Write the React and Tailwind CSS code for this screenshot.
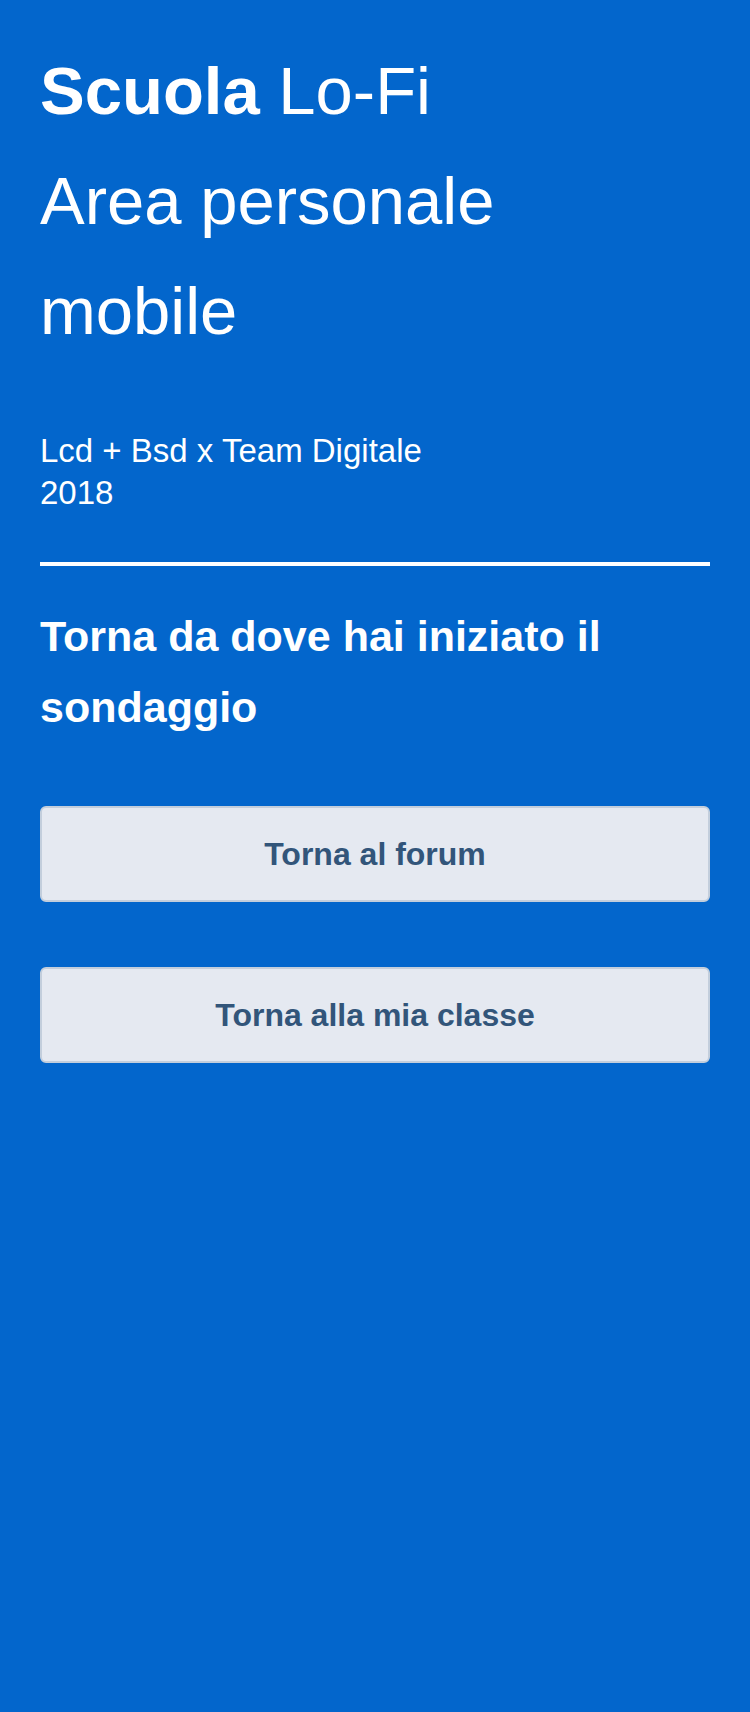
import React from 'react';

const App = () => {
  const buttons = ['Torna al forum', 'Torna alla mia classe'];

  return (
    <div className="min-h-[1712px] w-full bg-[#0366cc] px-[40px] pt-[36px] text-white font-['Liberation_Sans',Arial,sans-serif]">
      {/* Title */}
      <h1 className="text-[67px] leading-[110px] font-normal">
        <span className="font-bold">Scuola</span> Lo-Fi
        <br />
        Area personale
        <br />
        mobile
      </h1>

      <p className="mt-[64px] text-[33px] leading-[42px]">
        Lcd + Bsd x Team Digitale
        <br />
        2018
      </p>

      <hr className="mt-[48px] border-0 h-[4px] bg-white" />

      <h2 className="mt-[35px] text-[43px] leading-[71px] font-bold pr-[60px]">
        Torna da dove hai iniziato il sondaggio
      </h2>

      <div className="mt-[63px] flex flex-col gap-[65px]">
        {buttons.map((label) => (
          <button
            key={label}
            className="h-[96px] w-full flex items-center justify-center rounded-[6px] border-2 border-[#c3cedc] bg-[#e5e9f1] text-[32px] font-bold text-[#32557a]"
          >
            {label}
          </button>
        ))}
      </div>
    </div>
  );
};

export default App;
